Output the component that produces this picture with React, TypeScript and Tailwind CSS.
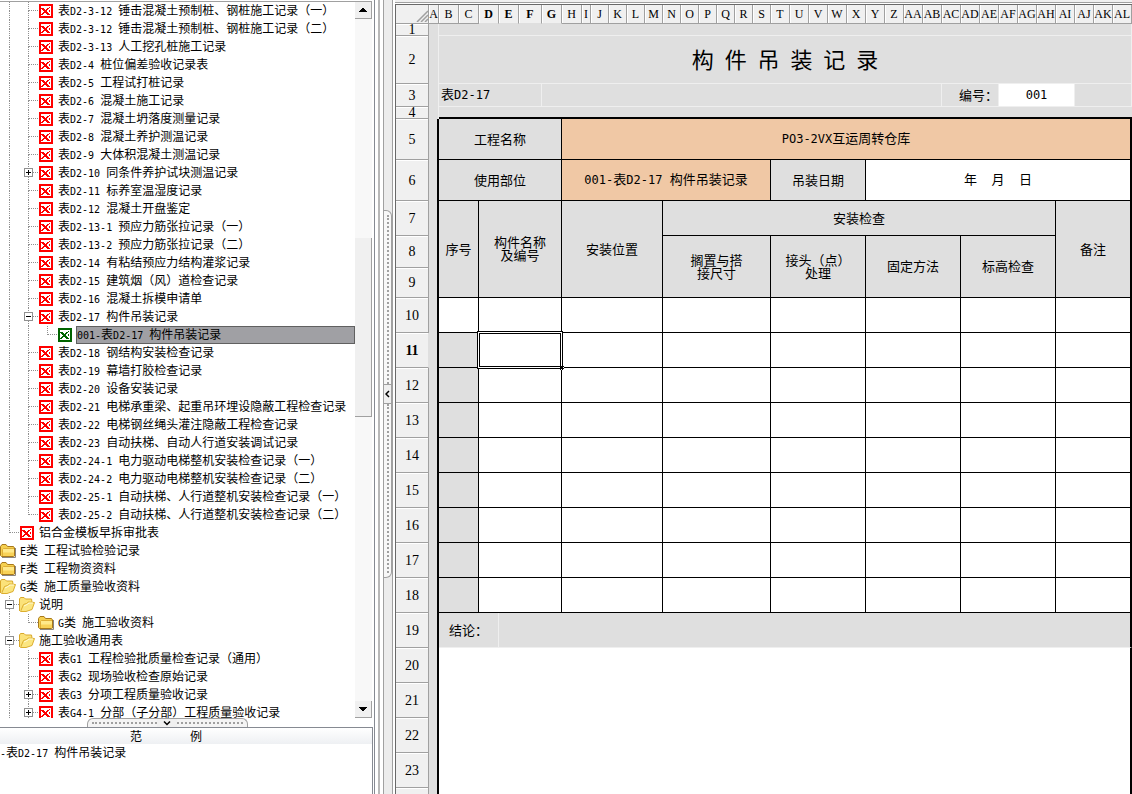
import { Fragment, type ReactNode } from "react";

type IconKind = "xls" | "xlsActive" | "folder" | "folderOpen";

// guides: one character per indent level. "|" passes through, "+" branches,
// "L" ends the branch.
type TreeRow = {
    label: string;
    guides: string;
    icon: IconKind;
    toggle?: "open" | "closed";
    selected?: boolean;
};

const xls = (label: string, guides = "|+", toggle?: "open" | "closed"): TreeRow => ({
    label,
    guides,
    icon: "xls",
    toggle,
});

const rows: TreeRow[] = [
    xls("表D2-3-12 锤击混凝土预制桩、钢桩施工记录（一）"),
    xls("表D2-3-12 锤击混凝土预制桩、钢桩施工记录（二）"),
    xls("表D2-3-13 人工挖孔桩施工记录"),
    xls("表D2-4 桩位偏差验收记录表"),
    xls("表D2-5 工程试打桩记录"),
    xls("表D2-6 混凝土施工记录"),
    xls("表D2-7 混凝土坍落度测量记录"),
    xls("表D2-8 混凝土养护测温记录"),
    xls("表D2-9 大体积混凝土测温记录"),
    xls("表D2-10 同条件养护试块测温记录", "|+", "closed"),
    xls("表D2-11 标养室温湿度记录"),
    xls("表D2-12 混凝土开盘鉴定"),
    xls("表D2-13-1 预应力筋张拉记录（一）"),
    xls("表D2-13-2 预应力筋张拉记录（二）"),
    xls("表D2-14 有粘结预应力结构灌浆记录"),
    xls("表D2-15 建筑烟（风）道检查记录"),
    xls("表D2-16 混凝土拆模申请单"),
    xls("表D2-17 构件吊装记录", "|+", "open"),
    { label: "001-表D2-17 构件吊装记录", guides: "||L", icon: "xlsActive", selected: true },
    xls("表D2-18 钢结构安装检查记录"),
    xls("表D2-19 幕墙打胶检查记录"),
    xls("表D2-20 设备安装记录"),
    xls("表D2-21 电梯承重梁、起重吊环埋设隐蔽工程检查记录"),
    xls("表D2-22 电梯钢丝绳头灌注隐蔽工程检查记录"),
    xls("表D2-23 自动扶梯、自动人行道安装调试记录"),
    xls("表D2-24-1 电力驱动电梯整机安装检查记录（一）"),
    xls("表D2-24-2 电力驱动电梯整机安装检查记录（二）"),
    xls("表D2-25-1 自动扶梯、人行道整机安装检查记录（一）"),
    xls("表D2-25-2 自动扶梯、人行道整机安装检查记录（二）", "|L"),
    xls("铝合金模板早拆审批表", "L"),
    { label: "E类 工程试验检验记录", guides: "", icon: "folder" },
    { label: "F类 工程物资资料", guides: "", icon: "folder" },
    { label: "G类 施工质量验收资料", guides: "", icon: "folderOpen" },
    { label: "说明", guides: "+", icon: "folderOpen", toggle: "open" },
    { label: "G类 施工验收资料", guides: "|L", icon: "folder" },
    { label: "施工验收通用表", guides: "+", icon: "folderOpen", toggle: "open" },
    xls("表G1 工程检验批质量检查记录（通用）"),
    xls("表G2 现场验收检查原始记录"),
    xls("表G3 分项工程质量验收记录", "|+", "closed"),
    xls("表G4-1 分部（子分部）工程质量验收记录", "|+", "closed"),
];

// Latin runs sit at half the width of a Chinese character.
function Mixed({ text, latin = "text-[10px]" }: { text: string; latin?: string }) {
    return (
        <>
            {text.split(/([\x20-\x7e]+)/).map((part, i) =>
                i % 2 ? (
                    <span key={i} className={`font-['DejaVu_Sans_Mono',monospace] leading-none ${latin}`}>
                        {part}
                    </span>
                ) : (
                    <Fragment key={i}>{part}</Fragment>
                ),
            )}
        </>
    );
}

function XlsIcon({ color }: { color: string }) {
    return (
        <svg viewBox="0 0 14 14" className="ml-px size-3.5" shapeRendering="crispEdges" aria-hidden="true">
            <rect width="14" height="14" fill={color} />
            <path d="M2 2h10v10H2z" fill="#fff" />
            <path
                d="M2 4h3v1H2zM8 4h2v1H8zM3 5h3v1H3zM7 5h2v1H7zM4 6h4v1H4zM5 7h3v1H5zM4 8h5v1H4zM3 9h2v1H3zM7 9h3v1H7zM2 10h2v1H2zM8 10h3v1H8zM10 3h1v1h-1zM10 6h1v2h-1z"
                fill={color}
            />
        </svg>
    );
}

function FolderIcon({ open }: { open: boolean }) {
    if (open) {
        return (
            <svg viewBox="0 0 16 16" className="size-4" aria-hidden="true">
                <path d="M.5 14V2l1-1.500h3.500l1.500 1.500h6l.5 3" fill="#fbe27a" stroke="#d9a82a" />
                <path d="M1.500 14.500 4.500 7.500l3-1 2-1.500 6 .5-2.500 7-6 2z" fill="#fbe580" stroke="#dcae2e" />
                <path d="M5 9l3-1.500 2-1.500h4" fill="none" stroke="#fffbd8" />
            </svg>
        );
    }
    return (
        <svg viewBox="0 0 16 16" className="size-4" aria-hidden="true">
            <path d="M2 14.500h13.500V5" fill="none" stroke="#8a8580" />
            <path d="M.5 12.500v-9L2 1.500h4l1.500 2h6l1 1.500v8l-1 .5h-12z" fill="#f5d050" stroke="#a9791b" />
            <path d="M2.500 13V6.500l1-1h10.500V13z" fill="#ffe98a" />
            <path d="M2.500 13V6.500l1-1h10.500" fill="none" stroke="#d8a32a" strokeWidth=".8" />
            <path d="M3 9.500h11V13H3z" fill="#f8d258" />
        </svg>
    );
}

function TreeIcon({ kind }: { kind: IconKind }) {
    if (kind === "xls") return <XlsIcon color="#ff0000" />;
    if (kind === "xlsActive") return <XlsIcon color="#006400" />;
    return <FolderIcon open={kind === "folderOpen"} />;
}

function Guide({ type, toggle }: { type: string; toggle?: "open" | "closed" }) {
    const line = "border-dotted border-[#909090]";
    return (
        <span className="relative flex h-full w-[19px] shrink-0 flex-col pl-[9px]">
            <span className={`h-[9px] border-l ${line} ${type === "|" ? "" : "border-b"}`} />
            <span className={`h-[9px] ${type === "L" ? "" : "border-l"} ${line}`} />
            {toggle && (
                <button
                    type="button"
                    aria-label={toggle === "open" ? "折叠" : "展开"}
                    className="absolute top-1 left-[5px] size-[9px] border border-[#909090] bg-white"
                >
                    <svg viewBox="0 0 7 7" className="size-[7px]" shapeRendering="crispEdges">
                        <path d={toggle === "open" ? "M1 3h5v1H1z" : "M1 3h5v1H1zM3 1h1v5H3z"} />
                    </svg>
                </button>
            )}
        </span>
    );
}

function Tree() {
    return (
        <ul role="tree" className="min-w-0 flex-1 overflow-hidden">
            {rows.map((row) => (
                <li
                    key={row.label}
                    role="treeitem"
                    aria-selected={!!row.selected}
                    className="flex h-[18px] items-center leading-4 whitespace-pre"
                >
                    {row.guides.split("").map((g, i) => (
                        <Guide key={i} type={g} toggle={i === row.guides.length - 1 ? row.toggle : undefined} />
                    ))}
                    <span className="w-[19px] shrink-0">
                        <TreeIcon kind={row.icon} />
                    </span>
                    {row.selected ? (
                        <span className="h-full flex-1 border border-[#606060] bg-[#a0a0a4] leading-[14px]">
                            <Mixed text={row.label} />
                        </span>
                    ) : (
                        <span className="self-start pl-px">
                            <Mixed text={row.label} />
                        </span>
                    )}
                </li>
            ))}
        </ul>
    );
}

function ScrollButton({ label, path }: { label: string; path: string }) {
    return (
        <button
            type="button"
            aria-label={label}
            className="flex h-[17px] w-full items-center justify-center border-r border-b border-[#a0a0a0] bg-[#f0f0f0]"
        >
            <svg viewBox="0 0 8 4" className="h-1 w-2" shapeRendering="crispEdges">
                <path d={path} />
            </svg>
        </button>
    );
}

function ScrollBar() {
    return (
        <div className="flex w-[17px] shrink-0 flex-col bg-[#f8f8f8]">
            <ScrollButton label="向上滚动" path="M3 0h2v1h1v1h1v1h1v1H0V3h1V2h1V1h1z" />
            <div className="grow-[219]" />
            <div className="grow-[179] border-r border-b border-[#a0a0a0] bg-[#f0f0f0]" />
            <div className="grow-[284]" />
            <ScrollButton label="向下滚动" path="M0 0h8v1H7v1H6v1H5v1H3V3H2V2H1V1H0z" />
        </div>
    );
}

function HorizontalGrip() {
    const dots = <span className="flex-1 border-t-2 border-dotted border-[#a0a0a0]" />;
    return (
        <div className="flex h-[9px] shrink-0 justify-center pr-10">
            <button
                type="button"
                aria-label="隐藏范例"
                className="flex w-[161px] items-center rounded-t-md border border-b-0 border-[#a0a0a0] bg-[#f4f4f4] px-1"
            >
                {dots}
                <span className="flex h-full w-5 items-center justify-center bg-[#f0f0f0]">
                    <svg viewBox="0 0 8 5" className="h-[5px] w-2" fill="none" stroke="#000" strokeWidth="1.5">
                        <path d="m1 .5 3 3 3-3" />
                    </svg>
                </span>
                {dots}
            </button>
        </div>
    );
}

function VerticalSplitter() {
    const dots = <span className="flex-1 border-l-2 border-dotted border-[#a0a0a0]" />;
    return (
        <div className="flex w-[10px] shrink-0 flex-col items-center justify-center border-x border-[#a0a0a0] bg-[#ececec] pb-1.5">
            <button
                type="button"
                aria-label="隐藏目录"
                className="flex h-[368px] w-2 flex-col items-center rounded-r-md border border-l-0 border-[#a0a0a0] bg-[#f8f8f8] py-1"
            >
                {dots}
                <span className="flex h-5 w-full items-center justify-center border-y border-[#a0a0a0] bg-[#f0f0f0]">
                    <svg viewBox="0 0 5 8" className="h-2 w-[5px]" fill="none" stroke="#000" strokeWidth="1.5">
                        <path d="m4 1-3 3 3 3" />
                    </svg>
                </span>
                {dots}
            </button>
        </div>
    );
}

const columns: [string, string][] = [
    ["A", "w-[10px]"],
    ["B", "w-[20px]"],
    ["C", "w-[20px]"],
    ["D", "w-[20px]"],
    ["E", "w-[20px]"],
    ["F", "w-[23px]"],
    ["G", "w-[20px]"],
    ["H", "w-[20px]"],
    ["I", "w-[9px]"],
    ..."JKLMNOPQRS".split("").map((c): [string, string] => [c, "w-[18px]"]),
    ..."TUVWXYZ".split("").map((c): [string, string] => [c, "w-[19px]"]),
    ..."ABCDEFGHIJKL".split("").map((c): [string, string] => ["A" + c, "w-[19px]"]),
];

type CellProps = {
    span: number;
    rows?: number;
    tone?: "gray" | "white" | "peach";
    grid?: boolean;
    last?: boolean;
    className?: string;
    children?: ReactNode;
};

const tones = { gray: "bg-[#dfdfdf]", white: "bg-white", peach: "bg-[#f0c8a5]" };

function Cell({ span, rows: rowSpan = 1, tone = "white", grid, last, className = "text-center", children }: CellProps) {
    const border = grid ? "border-[#efefef] border-b" : "border-black border-b";
    return (
        <td
            colSpan={span}
            rowSpan={rowSpan}
            className={`relative p-0 pb-0.5 align-middle ${tones[tone]} ${border} ${last ? "border-r-2 border-r-black" : "border-r"} ${className}`}
        >
            {children}
        </td>
    );
}

function Row({ n, h = "h-[35px]", children }: { n: number; h?: string; children?: ReactNode }) {
    const active = n === 11;
    return (
        <tr className={h}>
            <th
                scope="row"
                className={`border-r border-b border-[#a0a0a0] bg-[#f0f0f0] p-0 font-['Liberation_Serif',serif] text-sm leading-[11px] shadow-[inset_0_1px_0_#fff] ${active ? "border-r-[#dfdfdf] font-bold" : "font-normal"}`}
            >
                {n}
            </th>
            <td className={`bg-[#dfdfdf] p-0 ${n < 5 ? "border-r border-[#efefef]" : "border-r-2 border-black"}`} />
            {children}
        </tr>
    );
}

function Sheet() {
    const latin = "text-xs";
    return (
        <table className="w-full table-fixed border-separate border-spacing-0 text-[13px] leading-[13px]">
            <colgroup>
                <col className="w-[33px]" />
                {columns.map(([name, width]) => (
                    <col key={name} className={width} />
                ))}
            </colgroup>
            <thead>
                <tr className="h-[19px] font-['Liberation_Serif',serif] text-xs">
                    <td className="border-r border-b border-[#a0a0a0] bg-[#f0f0f0] p-0">
                        <svg viewBox="0 0 12 12" className="mt-1 ml-auto size-3" stroke="#a0a0a0" strokeWidth="1.500">
                            <path d="M1 12 12 1M5 12l7-7M9 12l3-3" />
                        </svg>
                    </td>
                    {columns.map(([name]) => {
                        const active = "DEFG".includes(name);
                        return (
                            <th
                                key={name}
                                scope="col"
                                className={`overflow-hidden border-r border-b border-[#a0a0a0] bg-[#f0f0f0] p-0 shadow-[inset_1px_0_0_#fff] ${active ? "border-b-[#dfdfdf] font-bold" : "font-normal"}`}
                            >
                                {name}
                            </th>
                        );
                    })}
                </tr>
            </thead>
            <tbody>
                <Row n={1} h="h-[12px]">
                    <Cell span={37} tone="gray" grid />
                </Row>
                <Row n={2} h="h-[48px]">
                    <Cell span={37} tone="gray" grid className="text-center text-[22px] leading-6 whitespace-pre">
                        <Mixed text="构 件 吊 装 记 录" latin="text-lg" />
                    </Cell>
                </Row>
                <Row n={3} h="h-[23px]">
                    <Cell span={5} tone="gray" grid className="pl-0.5 text-left">
                        <Mixed text="表D2-17" latin={latin} />
                    </Cell>
                    <Cell span={22} tone="gray" grid />
                    <Cell span={3} tone="gray" grid className="text-right">
                        编号：
                    </Cell>
                    <Cell span={4} grid>
                        <Mixed text="001" latin={latin} />
                    </Cell>
                    <Cell span={3} tone="gray" grid />
                </Row>
                <Row n={4} h="h-[12px]">
                    <td colSpan={37} className="border-b-2 border-black bg-[#dfdfdf] p-0" />
                </Row>
                <Row n={5} h="h-[41px]">
                    <Cell span={6} tone="gray">
                        工程名称
                    </Cell>
                    <Cell span={31} tone="peach" last>
                        <Mixed text="PO3-2VX互运周转仓库" latin={latin} />
                    </Cell>
                </Row>
                <Row n={6} h="h-[41px]">
                    <Cell span={6} tone="gray">
                        使用部位
                    </Cell>
                    <Cell span={12} tone="peach">
                        <Mixed text="001-表D2-17 构件吊装记录" latin={latin} />
                    </Cell>
                    <Cell span={5} tone="gray">
                        吊装日期
                    </Cell>
                    <Cell span={14} last className="text-center whitespace-pre">
                        <Mixed text="年  月  日" latin={latin} />
                    </Cell>
                </Row>
                <Row n={7}>
                    <Cell span={2} rows={3} tone="gray">
                        序号
                    </Cell>
                    <Cell span={4} rows={3} tone="gray">
                        构件名称
                        <br />
                        及编号
                    </Cell>
                    <Cell span={6} rows={3} tone="gray">
                        安装位置
                    </Cell>
                    <Cell span={21} tone="gray">
                        安装检查
                    </Cell>
                    <Cell span={4} rows={3} tone="gray" last>
                        备注
                    </Cell>
                </Row>
                <Row n={8} h="h-[32px]">
                    <Cell span={6} rows={2} tone="gray">
                        搁置与搭
                        <br />
                        接尺寸
                    </Cell>
                    <Cell span={5} rows={2} tone="gray">
                        接头（点）
                        <br />
                        处理
                    </Cell>
                    <Cell span={5} rows={2} tone="gray">
                        固定方法
                    </Cell>
                    <Cell span={5} rows={2} tone="gray">
                        标高检查
                    </Cell>
                </Row>
                <Row n={9} h="h-[30px]" />
                {[10, 11, 12, 13, 14, 15, 16, 17, 18].map((n) => (
                    <Row key={n} n={n}>
                        <Cell span={2} tone={n === 10 ? "white" : "gray"} />
                        <Cell span={4}>
                            {n === 11 && (
                                <span className="absolute -inset-0.5 z-10 border-3 border-double border-black bg-white">
                                    <span className="absolute -right-1 -bottom-1 size-[5px] border border-dotted border-white bg-black" />
                                </span>
                            )}
                        </Cell>
                        <Cell span={6} />
                        <Cell span={6} />
                        <Cell span={5} />
                        <Cell span={5} />
                        <Cell span={5} />
                        <Cell span={4} last />
                    </Row>
                ))}
                <Row n={19}>
                    <Cell span={3} tone="gray" grid>
                        结论：
                    </Cell>
                    <Cell span={34} tone="gray" grid last />
                </Row>
                {[20, 21, 22, 23, 24].map((n) => (
                    <Row key={n} n={n}>
                        <td colSpan={37} className="border-r-2 border-black bg-white p-0" />
                    </Row>
                ))}
            </tbody>
        </table>
    );
}

export default function App() {
    return (
        <div className="flex h-screen overflow-hidden bg-white font-['Noto_Sans_CJK_SC',sans-serif] text-xs text-black">
            <aside className="flex w-[375px] shrink-0 flex-col border-r border-[#868a92]">
                <div className="mt-px mr-0.5 flex min-h-0 flex-1 border-t border-[#a0a0a0]">
                    <Tree />
                    <ScrollBar />
                </div>
                <HorizontalGrip />
                <section className="mr-px h-[67px] shrink-0 border-t border-r border-[#868a92]">
                    <h2 className="flex h-4 justify-center gap-12 bg-linear-to-b from-white to-[#eef0f3] pr-10 leading-4">
                        <span>范</span>
                        <span>例</span>
                    </h2>
                    <p className="leading-4 whitespace-pre">
                        <Mixed text="-表D2-17 构件吊装记录" />
                    </p>
                </section>
            </aside>
            <div className="mx-[3px] w-[2px] shrink-0 bg-[#b8b8b8]" />
            <VerticalSplitter />
            <main className="ml-[2px] min-w-0 flex-1 overflow-hidden">
                <div className="h-[3px] border-b border-[#a0a0a0] bg-[#f0f0f0]" />
                <div className="mt-px border-t border-l border-[#696969]">
                    <Sheet />
                </div>
            </main>
        </div>
    );
}
